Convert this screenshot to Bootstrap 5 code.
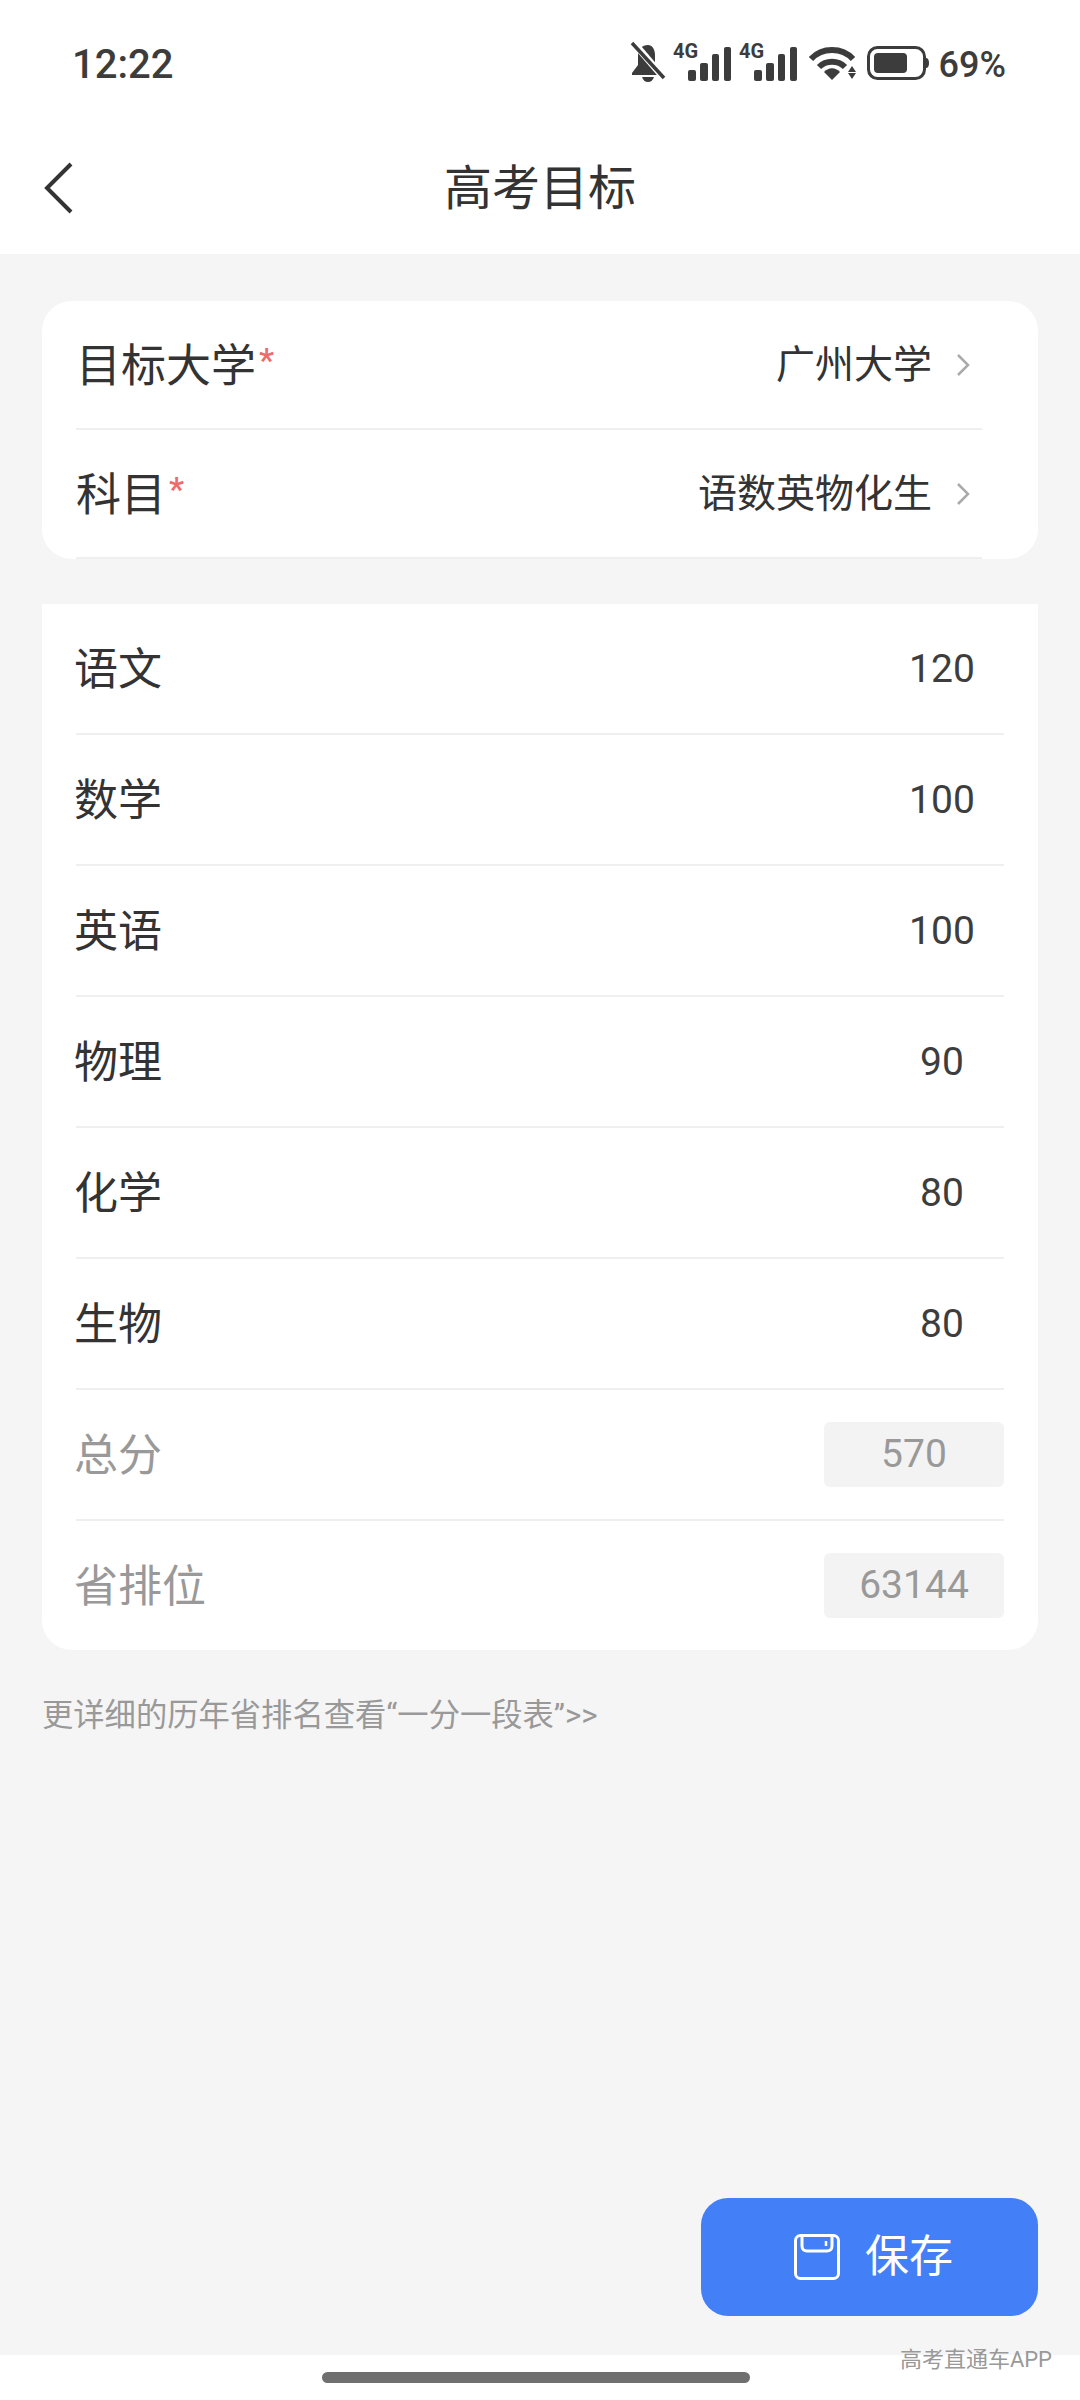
<!DOCTYPE html>
<html lang="zh-CN">
<head>
    <meta charset="UTF-8">
    <meta name="viewport" content="width=device-width, initial-scale=1.0">
    <title>高考目标</title>
    <link href="https://cdn.jsdelivr.net/npm/bootstrap@5.3.0/dist/css/bootstrap.min.css" rel="stylesheet">
    <style>
        body{
            font-family: Roboto, "Noto Sans CJK SC", sans-serif;
            color: #333;
            background: #fff;
        }
        .screen{ width: 1080px; height: 2400px; }
        .status-bar{ height: 82px; padding: 0 74px 0 72px; margin-top: 24px; color: #3c3c3c; }
        .status-bar .clock{ font-size: 40px; font-weight: 500; line-height: 1; }
        .status-bar .pct{ font-size: 36px; font-weight: 500; line-height: 1; margin-left: 10px; }
        .status-icons{ margin-bottom: 4px; }
        .bell-icon{ margin: 0 6px 6px 0; }
        .signal-icon{ margin-bottom: 10px; }
        .top-title{ height: 148px; padding-top: 17px; }
        .top-title h1{ font-size: 48px; font-weight: 400; margin: 0; color: #333; }
        .back-btn{ left: 43px; top: 55px; }
        .page-body{ background: #f5f5f5; padding: 47px 42px 39px; }
        .panel-one{ border-radius: 30px; height: 258px; }
        .panel-two{ margin-top: 45px; border-radius: 0 0 30px 30px; height: 1046px; }
        .panel-one .form-line{ height: 129px; margin: 0 56px 0 34px; border-bottom: 2px solid #efefef; }
        .panel-two .form-line{ height: 131px; margin: 0 34px; border-bottom: 2px solid #efefef; }
        .panel-two .form-line:last-child{ height: 129px; border-bottom: 0; }
        .line-label{ font-size: 44px; line-height: 1; color: #333; padding-top: 2px; }
        .panel-two .line-label{ margin-left: -2px; }
        .panel-one .line-label{ font-size: 45px; padding-top: 3px; }
        .line-label.muted-line{ color: #999; }
        .req-star{ font-size: 34px; font-weight: 500; color: #ee6b6b; line-height: 1; margin-left: 3px; position: relative; top: -5px; }
        .line-value{ font-size: 39px; line-height: 1; color: #333; padding-top: 2px; }
        .pick-arrow{ margin-left: 24px; margin-right: 12px; }
        .score-val{ width: 124px; text-align: center; font-size: 39px; line-height: 1; color: #3d3d3d; padding-top: 2px; }
        .score-box{ width: 180px; height: 65px; background: #f3f3f3; border-radius: 6px; font-size: 39px; color: #999; }
        .rank-note{ font-size: 31.3px; color: #999; margin-top: 48px; line-height: 36px; }
        .save-btn{ width: 337px; height: 118px; border-radius: 27px; background: #4380f7; color: #fff; font-size: 44px; border: 0; gap: 25px; padding: 0 0 0 8px; }
        .save-btn:hover{ background: #4380f7; color: #fff; }
        .home-area{ height: 45px; }
        .home-bar{ width: 428px; height: 11px; border-radius: 6px; background: #6f6f6f; margin: 17px 0 0 322px; }
        .watermark{ right: 28px; top: -10px; font-size: 22px; line-height: 30px; color: #999; }
    </style>
</head>
<body>
<div class="screen d-flex flex-column">
    <div class="status-bar d-flex justify-content-between align-items-center flex-shrink-0">
        <span class="clock">12:22</span>
        <div class="d-flex align-items-center">
            <svg class="bell-icon" width="38" height="42" viewBox="0 0 38 42" fill="#3c3c3c">
                <path d="M19 4c-6 0-10 4-10 11v9l-6 8v2h28v-2l-5-6V14c0-6-3-10-7-10z"/>
                <path d="M13 36h12c-1 3-3 5-6 5s-5-2-6-5z"/>
                <path d="M4 1L35 37" stroke="#fff" stroke-width="7"/>
                <path d="M3 2L35 37" stroke="#3c3c3c" stroke-width="3.5"/>
            </svg>
            <svg class="signal-icon" width="58" height="46" viewBox="0 -6 58 46" fill="#3c3c3c">
                <text x="0" y="15" font-family="Roboto" font-weight="700" font-size="20">4G</text>
                <rect x="15" y="27" width="8" height="11" rx="2"/>
                <rect x="27" y="20" width="8" height="18" rx="2"/>
                <rect x="39" y="11" width="7" height="27" rx="2"/>
                <rect x="51" y="4" width="7" height="34" rx="2"/>
            </svg>
            <svg class="signal-icon ms-2" width="58" height="46" viewBox="0 -6 58 46" fill="#3c3c3c">
                <text x="0" y="15" font-family="Roboto" font-weight="700" font-size="20">4G</text>
                <rect x="15" y="27" width="8" height="11" rx="2"/>
                <rect x="27" y="20" width="8" height="18" rx="2"/>
                <rect x="39" y="11" width="7" height="27" rx="2"/>
                <rect x="51" y="4" width="7" height="34" rx="2"/>
            </svg>
            <svg class="status-icons" width="48" height="34" viewBox="0 0 48 34" fill="none" style="margin-left:12px">
                <path d="M2 13C13 1 33 1 44 13" stroke="#3c3c3c" stroke-width="6"/>
                <path d="M10 21c7-7 19-7 26 0" stroke="#3c3c3c" stroke-width="6"/>
                <path d="M15 26c5-5 11-5 16 0l-8 8z" fill="#3c3c3c"/>
                <path d="M43 20l4 6h-8zM43 33l4-6h-8z" fill="#3c3c3c"/>
            </svg>
            <svg class="status-icons" width="62" height="34" viewBox="0 0 62 34" fill="none" style="margin-left:10px">
                <rect x="1.5" y="1.5" width="56" height="31" rx="9" stroke="#3c3c3c" stroke-width="3"/>
                <rect x="7" y="7" width="33" height="20" rx="4" fill="#3c3c3c"/>
                <path d="M59 12c2 0 3 2 3 5s-1 5-3 5z" fill="#3c3c3c"/>
            </svg>
            <span class="pct">69%</span>
        </div>
    </div>

    <div class="top-title d-flex justify-content-center align-items-center position-relative flex-shrink-0">
        <svg class="back-btn position-absolute" width="32" height="54" viewBox="0 0 32 54" fill="none">
            <path d="M28 3L4 27L28 51" stroke="#333" stroke-width="4"/>
        </svg>
        <h1>高考目标</h1>
    </div>

    <div class="page-body flex-grow-1 d-flex flex-column">
        <div class="panel-one bg-white overflow-hidden">
            <div class="form-line d-flex justify-content-between align-items-center">
                <div class="d-flex align-items-center"><span class="line-label">目标大学</span><span class="req-star">*</span></div>
                <div class="d-flex align-items-center">
                    <span class="line-value">广州大学</span>
                    <svg class="pick-arrow" width="14" height="24" viewBox="0 0 14 24" fill="none"><path d="M2 2L12 12L2 22" stroke="#aaa" stroke-width="2.5"/></svg>
                </div>
            </div>
            <div class="form-line d-flex justify-content-between align-items-center">
                <div class="d-flex align-items-center"><span class="line-label">科目</span><span class="req-star">*</span></div>
                <div class="d-flex align-items-center">
                    <span class="line-value">语数英物化生</span>
                    <svg class="pick-arrow" width="14" height="24" viewBox="0 0 14 24" fill="none"><path d="M2 2L12 12L2 22" stroke="#aaa" stroke-width="2.5"/></svg>
                </div>
            </div>
        </div>

        <div class="panel-two bg-white">
            <div class="form-line d-flex justify-content-between align-items-center"><span class="line-label">语文</span><span class="score-val">120</span></div>
            <div class="form-line d-flex justify-content-between align-items-center"><span class="line-label">数学</span><span class="score-val">100</span></div>
            <div class="form-line d-flex justify-content-between align-items-center"><span class="line-label">英语</span><span class="score-val">100</span></div>
            <div class="form-line d-flex justify-content-between align-items-center"><span class="line-label">物理</span><span class="score-val">90</span></div>
            <div class="form-line d-flex justify-content-between align-items-center"><span class="line-label">化学</span><span class="score-val">80</span></div>
            <div class="form-line d-flex justify-content-between align-items-center"><span class="line-label">生物</span><span class="score-val">80</span></div>
            <div class="form-line d-flex justify-content-between align-items-center"><span class="line-label muted-line">总分</span><span class="score-box d-flex justify-content-center align-items-center">570</span></div>
            <div class="form-line d-flex justify-content-between align-items-center"><span class="line-label muted-line">省排位</span><span class="score-box d-flex justify-content-center align-items-center">63144</span></div>
        </div>

        <div class="rank-note">更详细的历年省排名查看“一分一段表”&gt;&gt;</div>

        <button type="button" class="btn save-btn d-flex justify-content-center align-items-center mt-auto ms-auto">
            <svg width="46" height="46" viewBox="0 0 46 46" fill="none">
                <rect x="1.5" y="1.5" width="43" height="43" rx="5" stroke="#fff" stroke-width="3"/>
                <path d="M8 2v10c0 3 2 5 5 5h20c3 0 5-2 5-5V2" stroke="#fff" stroke-width="3"/>
                <path d="M32 7v5" stroke="#fff" stroke-width="2.5"/>
            </svg>
            <span>保存</span>
        </button>
    </div>

    <div class="home-area position-relative flex-shrink-0">
        <div class="home-bar"></div>
        <span class="watermark position-absolute">高考直通车APP</span>
    </div>
</div>
<script src="https://cdn.jsdelivr.net/npm/bootstrap@5.3.0/dist/js/bootstrap.bundle.min.js"></script>
</body>
</html>
